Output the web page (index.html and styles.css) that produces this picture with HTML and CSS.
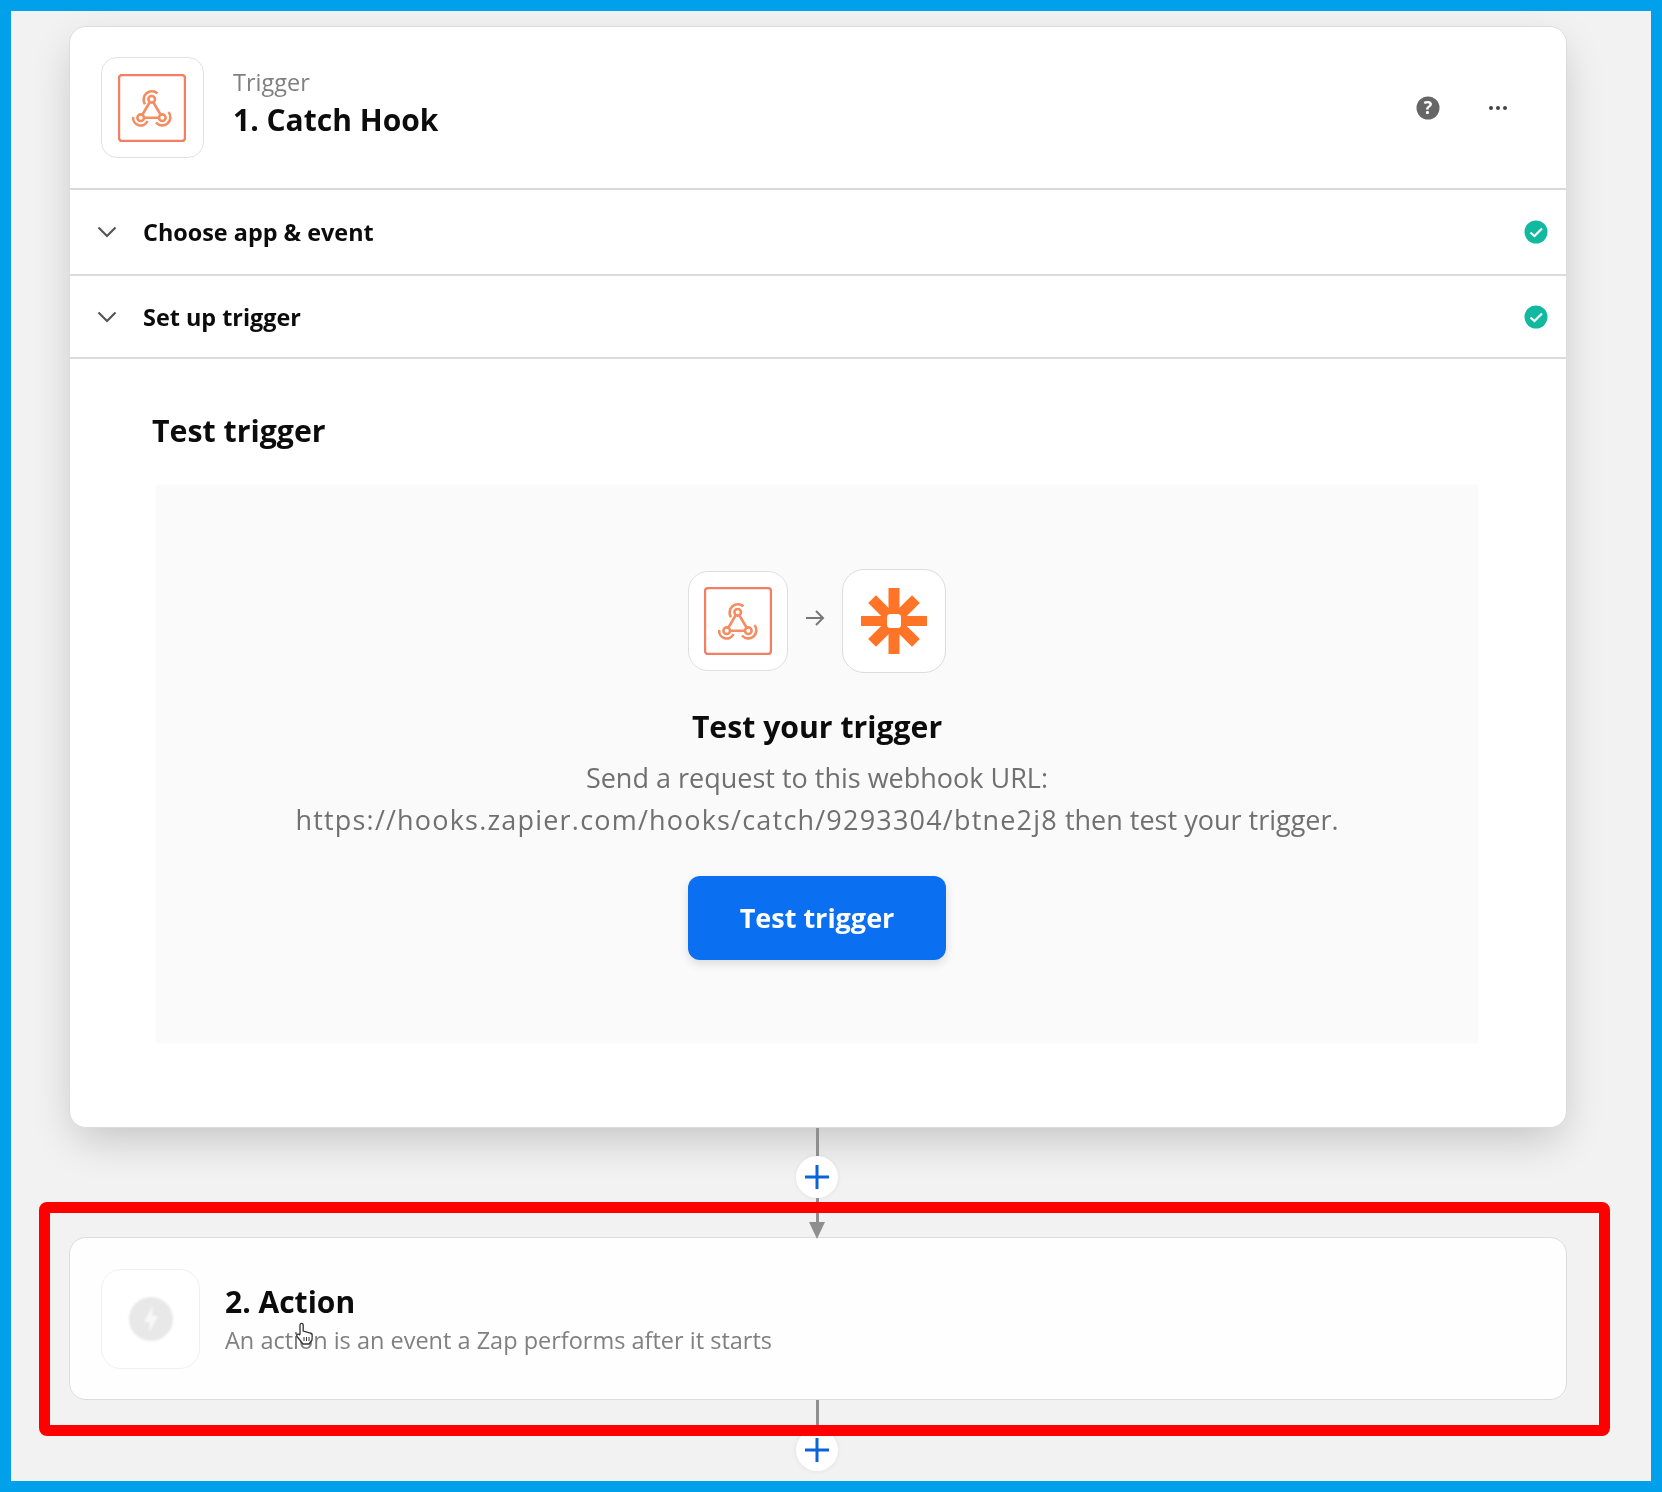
FILE: index.html
```html
<!DOCTYPE html>
<html lang="en">
<head>
<meta charset="utf-8">
<title>Catch Hook</title>
<link rel="stylesheet" href="styles.css">
</head>
<body>
<svg class="defs" width="0" height="0" aria-hidden="true">
  <symbol id="webhook" viewBox="0 0 68 68">
    <rect x="1" y="1" width="66" height="66" rx="3" fill="none" stroke="#f27f62" stroke-width="2.4"/>
    <g fill="none" stroke="#f58d63" stroke-width="2.6">
      <path d="M31.5 28.5 L24.5 40.5 M26 43.7 H41 M35.5 28.5 L42.5 40.5"/>
      <circle cx="33.7" cy="25.3" r="3.3"/>
      <circle cx="22.7" cy="43.7" r="3.3"/>
      <circle cx="44.3" cy="43.7" r="3.3"/>
      <path d="M27 30.3 A8.4 8.4 0 0 1 39.5 19.3"/>
      <path d="M15.2 43 A7.5 7.5 0 0 0 29.5 47"/>
      <path d="M50.5 38 A8 8 0 0 1 38 48.5"/>
    </g>
  </symbol>
  <symbol id="check" viewBox="0 0 24 24">
    <circle cx="12" cy="12" r="11.5" fill="#12b9a0"/>
    <path d="M6.5 12.5 L10.5 16 L18 8.5" fill="none" stroke="#fff" stroke-width="2.2"/>
  </symbol>
  <symbol id="chevron" viewBox="0 0 20 12">
    <path d="M1.5 1.5 L10 10 L18.5 1.5" fill="none" stroke="#555" stroke-width="2.2"/>
  </symbol>
  <symbol id="plus" viewBox="0 0 26 26">
    <path d="M13 1 V25 M1 13 H25" fill="none" stroke="#0b63d8" stroke-width="3"/>
  </symbol>
</svg>

<div class="frame">
  <main class="column">
    <section class="card card-trigger">
      <header class="step-head">
        <div class="app-box app-box-lg">
          <svg class="webhook" width="68" height="68"><use href="#webhook"/></svg>
        </div>
        <div class="step-title">
          <div class="eyebrow">Trigger</div>
          <h1 class="step-name">1. Catch Hook</h1>
        </div>
        <div class="step-tools">
          <svg class="help" width="24" height="24" viewBox="0 0 24 24">
            <circle cx="12" cy="12" r="11.5" fill="#666"/>
            <text x="12" y="18" text-anchor="middle" class="help-mark">?</text>
          </svg>
          <div class="dots"><span></span><span></span><span></span></div>
        </div>
      </header>

      <div class="row">
        <svg class="chevron" width="20" height="12"><use href="#chevron"/></svg>
        <span class="row-label">Choose app &amp; event</span>
        <svg class="check" width="24" height="24"><use href="#check"/></svg>
      </div>
      <div class="row row-short">
        <svg class="chevron" width="20" height="12"><use href="#chevron"/></svg>
        <span class="row-label">Set up trigger</span>
        <svg class="check" width="24" height="24"><use href="#check"/></svg>
      </div>

      <div class="test-section">
        <h2 class="test-heading">Test trigger</h2>
        <div class="test-box">
          <div class="flow-icons">
            <div class="app-box app-box-sm">
              <svg width="68" height="68"><use href="#webhook"/></svg>
            </div>
            <svg class="flow-arrow" width="20" height="18" viewBox="0 0 20 18">
              <path d="M1 9 H18 M11 2 L18 9 L11 16" fill="none" stroke="#777" stroke-width="2"/>
            </svg>
            <div class="app-box app-box-zap">
              <svg width="66" height="66" viewBox="0 0 66 66">
                <g fill="#ff7426">
                  <rect x="0" y="28" width="66" height="10"/>
                  <rect x="27.5" y="0" width="11" height="66"/>
                  <rect x="27.5" y="2" width="11" height="62" transform="rotate(45 33 33)"/>
                  <rect x="27.5" y="2" width="11" height="62" transform="rotate(-45 33 33)"/>
                </g>
                <rect x="26" y="26" width="14" height="14" rx="3.5" fill="#fff"/>
              </svg>
            </div>
          </div>
          <h3 class="test-title">Test your trigger</h3>
          <p class="test-copy">Send a request to this webhook URL:<br><span class="url">https://hooks.zapier.com/hooks/catch/9293304/btne2j8</span> then test your trigger.</p>
          <button class="primary" type="button">Test trigger</button>
        </div>
      </div>
    </section>

    <div class="connector">
      <span class="line"></span>
      <span class="add"><svg width="26" height="26"><use href="#plus"/></svg></span>
      <span class="line line-lower"></span>
      <span class="arrow-head"></span>
    </div>

    <section class="card card-action">
      <div class="app-box app-box-ghost">
        <svg class="ghost-icon" width="46" height="46" viewBox="0 0 46 46">
          <circle cx="23" cy="23" r="22" fill="#e8e8e8"/>
          <path d="M25 9 L16 26 H22 L21 37 L30 20 H24 Z" fill="#f8f8f8"/>
        </svg>
      </div>
      <div class="action-text">
        <h2 class="action-name">2. Action</h2>
        <p class="action-copy">An action is an event a Zap performs after it starts</p>
      </div>
    </section>

    <div class="connector connector-end">
      <span class="line line-end"></span>
      <span class="add"><svg width="26" height="26"><use href="#plus"/></svg></span>
    </div>
  </main>

  <div class="highlight"></div>
  <svg class="cursor" width="20" height="24" viewBox="0 0 20 24">
    <path d="M5 12 V3 a1.6 1.6 0 0 1 3.2 0 V9 l7 2 a2.5 2.5 0 0 1 2 2.6 L17 18 L14 22 H8 L2 14.5 a1.5 1.5 0 0 1 2.5 -1.8 Z" fill="#fff" stroke="#333" stroke-width="1.3"/>
    <path d="M9 15 V19 M11.5 15 V19 M14 15 V19" stroke="#333" stroke-width="1"/>
  </svg>
</div>
</body>
</html>
```

FILE: styles.css
```css
* { box-sizing: border-box; }

html, body {
  margin: 0;
  padding: 0;
}

body {
  font-family: "Open Sans", "Liberation Sans", sans-serif;
  color: #0c0c0c;
}

h1, h2, h3, p { margin: 0; }

.defs { position: absolute; }

.frame {
  position: relative;
  width: 1662px;
  height: 1492px;
  border: 11px solid #00a0ea;
  background: #f2f2f2;
  overflow: hidden;
}

.column {
  width: 1498px;
  margin-left: 58px;
  padding-top: 15px;
  filter: blur(0.5px);
}

.card {
  background: #fff;
  border: 1px solid #dcdcdc;
  border-radius: 17px;
}

.card-trigger {
  height: 1102px;
  box-shadow: 0 16px 44px -6px rgba(0, 0, 0, 0.2);
  overflow: hidden;
}

.step-head {
  display: flex;
  align-items: center;
  height: 163px;
  padding: 0 59px 0 30.5px;
  border-bottom: 2px solid #dadada;
}

.app-box {
  display: flex;
  align-items: center;
  justify-content: center;
  flex: none;
  background: #fff;
  border: 1px solid #e2e2e2;
  border-radius: 16px;
}

.app-box-lg { width: 103px; height: 101px; }
.app-box-sm { width: 100px; height: 100px; border-radius: 20px; border-color: #dedede; }
.app-box-zap { width: 104px; height: 104px; border-radius: 22px; border-color: #dcdcdc; }
.app-box-ghost { width: 99px; height: 100px; border-radius: 20px; border-color: #f0f0f0; }

.step-title {
  margin-left: 29.5px;
  margin-bottom: 8px;
  flex: 1;
}

.eyebrow {
  font-size: 23.5px;
  line-height: 30px;
  color: #808080;
}

.step-name {
  margin-top: 3px;
  font-size: 30px;
  line-height: 40px;
  font-weight: 700;
}

.step-tools {
  display: flex;
  align-items: center;
  gap: 49px;
}

.help-mark {
  font-family: "Open Sans", sans-serif;
  font-size: 18px;
  font-weight: 700;
  fill: #fff;
}

.dots {
  display: flex;
  gap: 3px;
}

.dots span {
  width: 4px;
  height: 4px;
  border-radius: 50%;
  background: #444;
}

.row {
  display: flex;
  align-items: center;
  height: 86px;
  padding: 0 18px 1px 27px;
  border-bottom: 2px solid #dcdcdc;
}

.row-short { height: 83px; padding-bottom: 0; }

.row-label {
  flex: 1;
  margin-left: 26px;
  font-size: 23.4px;
  font-weight: 700;
}

.test-section {
  padding: 0 0 0 85px;
}

.test-heading {
  padding: 49px 0 32px 0;
  margin-left: -3px;
  font-size: 30.3px;
  line-height: 45px;
  font-weight: 700;
}

.test-box {
  display: flex;
  flex-direction: column;
  align-items: center;
  width: 1322px;
  height: 558px;
  margin-left: 1px;
  padding-top: 84px;
  background: #fafafa;
  box-shadow: 0 0 4px #fafafa;
}

.flow-icons {
  display: flex;
  align-items: center;
  gap: 17px;
}

.flow-arrow { margin-top: -6px; }

.test-title {
  margin-top: 32px;
  font-size: 30.2px;
  line-height: 44px;
  font-weight: 700;
}

.test-copy {
  margin-top: 8px;
  font-size: 27px;
  line-height: 42px;
  color: #707070;
  text-align: center;
  white-space: nowrap;
}

.url { letter-spacing: 1.2px; }

.primary {
  width: 258px;
  height: 84px;
  margin-top: 35px;
  padding-bottom: 3px;
  border: 0;
  border-radius: 12px;
  background: #0a6ff0;
  box-shadow: 0 4px 10px rgba(0, 0, 0, 0.12);
  color: #fff;
  font: 700 27px "Open Sans", sans-serif;
}

.connector {
  display: flex;
  flex-direction: column;
  align-items: center;
  height: 109px;
  margin-right: 2px;
}

.line {
  width: 3px;
  height: 28px;
  flex: none;
  background: #8f8f8f;
}

.line-lower { height: 27px; }
.line-end { height: 29px; }

.add {
  display: flex;
  align-items: center;
  justify-content: center;
  flex: none;
  width: 42px;
  height: 42px;
  border-radius: 50%;
  background: #fff;
  box-shadow: 0 0 5px rgba(0, 0, 0, 0.08);
}

.arrow-head {
  width: 0;
  height: 0;
  margin-top: -3px;
  border-left: 8px solid transparent;
  border-right: 8px solid transparent;
  border-top: 17px solid #8f8f8f;
  position: relative;
  z-index: 1;
}

.connector-end { height: auto; }

.card-action {
  display: flex;
  align-items: center;
  height: 163px;
  padding-left: 31px;
  background: #fefefe;
}

.ghost-icon { filter: blur(1px); }

.action-text { margin-left: 25px; }

.action-name {
  font-size: 30px;
  line-height: 40px;
  font-weight: 700;
}

.action-copy {
  margin-top: 2px;
  font-size: 23.5px;
  line-height: 32px;
  color: #808080;
}

.highlight {
  position: absolute;
  left: 28px;
  top: 1191px;
  width: 1571px;
  height: 234px;
  border: 11px solid #ff0000;
  border-radius: 8px;
}

.cursor {
  position: absolute;
  left: 284px;
  top: 1311px;
}
```
